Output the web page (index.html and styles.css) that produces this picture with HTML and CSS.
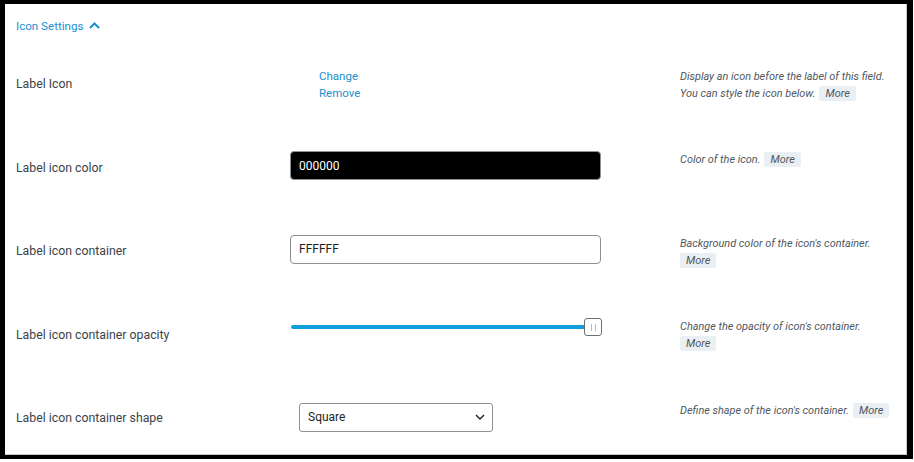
FILE: index.html
```html
<!DOCTYPE html>
<html>
<head>
<meta charset="utf-8">
<link rel="stylesheet" href="styles.css">
</head>
<body>
<div class="frame">
  <div class="panel">
    <div class="heading">
      <span>Icon Settings</span>
      <svg class="chev" width="11" height="7" viewBox="0 0 11 7"><path d="M1 6 L5.5 1.5 L10 6" fill="none" stroke="#1a8fd0" stroke-width="2"/></svg>
    </div>

    <div class="row">
      <div class="label">Label Icon</div>
      <div class="control">
        <div class="links"><a>Change</a><a>Remove</a></div>
      </div>
      <div class="desc">
        <div>Display an icon before the label of this field.</div>
        <div><span>You can style the icon below.</span><span class="more">More</span></div>
      </div>
    </div>

    <div class="row">
      <div class="label">Label icon color</div>
      <div class="control">
        <div class="input dark">000000</div>
      </div>
      <div class="desc"><span>Color of the icon.</span><span class="more">More</span></div>
    </div>

    <div class="row">
      <div class="label">Label icon container</div>
      <div class="control">
        <div class="input">FFFFFF</div>
      </div>
      <div class="desc">
        <div>Background color of the icon's container.</div>
        <div><span class="more wrap">More</span></div>
      </div>
    </div>

    <div class="row">
      <div class="label">Label icon container opacity</div>
      <div class="control">
        <div class="slider">
          <div class="track"></div>
          <div class="thumb"><i></i><i></i></div>
        </div>
      </div>
      <div class="desc">
        <div>Change the opacity of icon's container.</div>
        <div><span class="more wrap">More</span></div>
      </div>
    </div>

    <div class="row">
      <div class="label">Label icon container shape</div>
      <div class="control">
        <div class="select">
          <span>Square</span>
          <svg width="10" height="6" viewBox="0 0 10 6"><path d="M1 1 L5 5 L9 1" fill="none" stroke="#1e1e1e" stroke-width="1.4"/></svg>
        </div>
      </div>
      <div class="desc"><span>Define shape of the icon's container.</span><span class="more">More</span></div>
    </div>
  </div>
</div>
</body>
</html>
```

FILE: styles.css
```css
html, body {
  margin: 0;
  padding: 0;
  background: #fff;
}
body {
  font-family: Roboto, "Liberation Sans", sans-serif;
  color: #3c434a;
}
.frame {
  width: 913px;
  height: 459px;
  box-sizing: border-box;
  border: 5px solid #000;
  border-top-width: 4px;
  border-right-width: 6px;
  border-bottom-width: 4px;
}
.panel {
  height: 100%;
  box-sizing: border-box;
  border-right: 1px solid #c9c9c9;
  border-bottom: 1px solid #c9c9c9;
  padding-left: 11px;
}
.heading {
  height: 38.5px;
  display: flex;
  align-items: center;
  gap: 5px;
  color: #1a8fd0;
  font-size: 11.6px;
  padding-top: 6px;
  box-sizing: border-box;
}
.chev { margin-top: -1px; margin-left: 1px; }
.row {
  height: 83.5px;
  display: grid;
  grid-template-columns: 274px 390px 215px;
  align-items: center;
}
.label {
  font-size: 12.3px;
  color: #3c434a;
}
.control { display: flex; align-items: center; }
.links {
  display: flex;
  flex-direction: column;
  gap: 3px;
  margin-left: 29px;
  margin-top: 1px;
  font-size: 11.5px;
  color: #1a8fd0;
}
.input {
  width: 311px;
  height: 29px;
  box-sizing: border-box;
  border: 1px solid #8c8f94;
  border-radius: 4px;
  padding-left: 8px;
  display: flex;
  align-items: center;
  font-size: 12px;
  color: #1e1e1e;
  margin-top: -4px;
}
.input.dark {
  background: #000;
  color: #fff;
  border-color: #8c8f94;
}
.slider {
  position: relative;
  width: 312px;
  height: 18px;
  margin-left: 1px;
  margin-top: -15px;
}
.track {
  position: absolute;
  left: 0;
  top: 7px;
  width: 300px;
  height: 4px;
  border-radius: 2px;
  background: #11a0dc;
}
.thumb {
  position: absolute;
  left: 293px;
  top: 0;
  width: 18px;
  height: 18px;
  box-sizing: border-box;
  border: 1px solid #6c7075;
  border-radius: 3px;
  background: #fff;
  display: flex;
  align-items: center;
  justify-content: center;
  gap: 3px;
}
.thumb i {
  display: block;
  width: 1px;
  height: 7px;
  background: #b5bcc2;
}
.select {
  width: 194px;
  height: 29px;
  box-sizing: border-box;
  margin-left: 9px;
  margin-top: -2px;
  border: 1px solid #8c8f94;
  border-radius: 3px;
  display: flex;
  align-items: center;
  justify-content: space-between;
  padding: 0 7px 0 8px;
  font-size: 12px;
  color: #1e1e1e;
}
.desc {
  align-self: start;
  margin-top: 25px;
  font-size: 10.9px;
  font-style: italic;
  line-height: 17px;
  color: #50575e;
}
.more {
  display: inline-block;
  background: #e9eff3;
  padding: 0 6px;
  line-height: 15px;
  margin-left: 4px;
  border-radius: 2px;
  color: #50575e;
  vertical-align: top;
  margin-top: 1px;
}
.more.wrap { margin-left: 0; }
```
